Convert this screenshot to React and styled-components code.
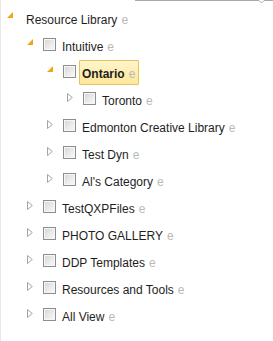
import React from 'react';
import styled, { createGlobalStyle } from 'styled-components';

const Global = createGlobalStyle`
  html, body { margin: 0; padding: 0; background: #fff; }
  body { font-family: "Liberation Sans", Arial, sans-serif; }
`;

const Page = styled.div`
  width: 273px;
  height: 341px;
  box-sizing: border-box;
  border-left: 1px solid #e8e8e8;
  overflow: hidden;
  background: #fff;
`;

const TopEdge = styled.div`
  height: 4px;
  display: flex;
  svg { display: block; }
`;

const List = styled.div`
  display: flex;
  flex-direction: column;
`;

const Children = styled.div`
  display: flex;
  flex-direction: column;
  padding-left: 20px;
`;

const Row = styled.div`
  height: 27px;
  display: flex;
  align-items: center;
  padding-left: 4px;
`;

const Toggle = styled.span`
  width: 18px;
  height: 27px;
  flex: none;
  display: flex;
  align-items: center;
  padding-left: 2px;
  box-sizing: border-box;
  svg { display: block; margin-bottom: ${p => (p.$open ? '6px' : '3px')}; }
`;

const Check = styled.span`
  width: 13px;
  height: 13px;
  flex: none;
  box-sizing: border-box;
  border: 1px solid #8e8e8e;
  background: linear-gradient(135deg, #d4d4d4 0%, #e9e9e9 50%, #fafafa 100%);
  box-shadow: inset 0 0 0 1px #f6f6f6;
  margin-right: 3px;
`;

const Label = styled.span`
  display: flex;
  align-items: flex-start;
  box-sizing: border-box;
  height: 25px;
  margin-top: 2px;
  padding: 3px 3px 0 2px;
  line-height: 21px;
  font-size: 12px;
  white-space: nowrap;
  color: #1e1e1e;
  font-weight: ${p => (p.$selected ? 700 : 400)};
  border: 1px solid ${p => (p.$selected ? '#e4c35f' : 'transparent')};
  border-radius: 1px;
  background: ${p => (p.$selected ? 'linear-gradient(#fef5cc, #fce79b)' : 'transparent')};
`;

const Edit = styled.span`
  margin-left: 4px;
  color: #b9b9b9;
  font-weight: 400;
`;

const OpenArrow = () => (
  <svg width="6" height="6" viewBox="0 0 6 6">
    <polygon points="0,6 6,6 6,0" fill="#f2a514" />
  </svg>
);

const ClosedArrow = () => (
  <svg width="6" height="9" viewBox="0 0 6 9">
    <polygon points="0.5,0.5 5.3,4.5 0.5,8.5" fill="#fff" stroke="#a4a4a4" strokeWidth="1" />
  </svg>
);

const tree = {
  label: 'Resource Library',
  root: true,
  children: [
    {
      label: 'Intuitive',
      children: [
        { label: 'Ontario', selected: true, children: [{ label: 'Toronto' }] },
        { label: 'Edmonton Creative Library' },
        { label: 'Test Dyn' },
        { label: "Al's Category" },
      ],
    },
    { label: 'TestQXPFiles' },
    { label: 'PHOTO GALLERY' },
    { label: 'DDP Templates' },
    { label: 'Resources and Tools' },
    { label: 'All View' },
  ],
};

const Node = ({ node }) => {
  const open = !!node.children;
  return (
    <>
      <Row>
        <Toggle $open={open}>{open ? <OpenArrow /> : <ClosedArrow />}</Toggle>
        {!node.root && <Check />}
        <Label $selected={node.selected}>
          {node.label}
          <Edit>e</Edit>
        </Label>
      </Row>
      {open && (
        <Children>
          {node.children.map((c) => (
            <Node key={c.label} node={c} />
          ))}
        </Children>
      )}
    </>
  );
};

export default function App() {
  return (
    <Page>
      <Global />
      <TopEdge>
        <svg width="272" height="4" viewBox="0 0 272 4">
          <polyline
            points="134,0.5 258,0.5 260.5,3 263,0.5 272,0.5"
            fill="none"
            stroke="#a9a9a9"
            strokeWidth="1"
          />
        </svg>
      </TopEdge>
      <List>
        <Node node={tree} />
      </List>
    </Page>
  );
}
